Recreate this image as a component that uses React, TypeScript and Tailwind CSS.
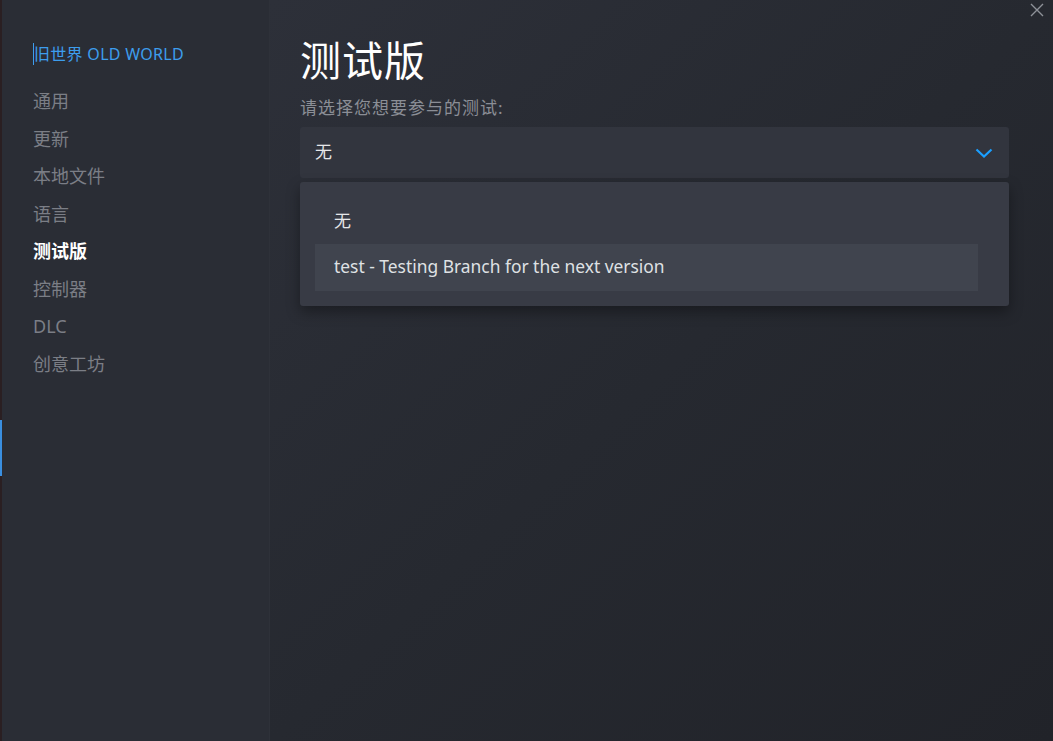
import React from 'react';

const navItems = ['通用', '更新', '本地文件', '语言', '测试版', '控制器', 'DLC', '创意工坊'];

const font = 'font-["Noto_Sans","Noto_Sans_CJK_SC",sans-serif]';

const App: React.FC = () => {
  return (
    <div className={`w-[1053px] h-[741px] flex overflow-hidden ${font}`}>
      {/* left strip of the window behind */}
      <div className="w-[2px] h-full bg-[#2a1f22] flex flex-col">
        <div className="h-[420px]" />
        <div className="h-[56px] bg-[#3a8fe0]" />
      </div>

      <div className="w-[268px] h-full bg-[#2a2d35] border-r border-[#2e3139] flex flex-col pl-[31px] pt-[42px]">
        <div className="text-[16px] leading-[24px] text-[#3d9ded] tracking-[0.3px]">
          <span className="border-l border-[#3d9ded]">旧世界</span> OLD WORLD
        </div>
        <div className="mt-[22px] flex flex-col">
          {navItems.map((item) => (
            <div
              key={item}
              className={`h-[37.5px] leading-[26px] text-[18px] ${
                item === '测试版' ? 'text-white font-bold' : 'text-[#7b7e86]'
              }`}
            >
              {item}
            </div>
          ))}
        </div>
      </div>

      <div className="flex-1 h-full bg-gradient-to-br from-[#2d3039] via-[#262930] to-[#212329] flex">
        <div className="w-[709px] ml-[30px] pt-[32px] flex flex-col">
          <h1 className="text-[41px] leading-[56px] text-white tracking-[1px]">测试版</h1>
          <div className="mt-[8px] text-[17px] leading-[24px] tracking-[1px] text-[#8b8e96]">请选择您想要参与的测试:</div>
          <div className="mt-[7px] h-[51px] rounded-[3px] bg-[#32353e] flex items-center justify-between pl-[15px] pr-[16px]">
            <span className="text-[17px] leading-[24px] text-[#e6e7e9] -mt-[2px]">无</span>
            <svg width="18" height="10" viewBox="0 0 18 10" fill="none">
              <path d="M1.5 1.5 L9 8.5 L16.5 1.5" stroke="#1a9fff" strokeWidth="2.2" />
            </svg>
          </div>
          <div className="mt-[4px] rounded-[3px] bg-[#383b45] shadow-[0_6px_14px_rgba(0,0,0,0.35)] pt-[15px] pb-[15px] pl-[15px] pr-[31px] flex flex-col">
            <div className="h-[47px] flex items-center pl-[19px] text-[17px] text-[#e6e7e9]">无</div>
            <div className="h-[47px] flex items-center pl-[19px] bg-[#40444e] text-[17.4px] text-[#dfe1e4] pb-[2px]">
              test - Testing Branch for the next version
            </div>
          </div>
        </div>
        <div className="flex-1 flex justify-end pt-[3px] pr-[9px]">
          <svg width="14" height="14" viewBox="0 0 14 14" fill="none">
            <path d="M1 1 L13 13 M13 1 L1 13" stroke="#8e9198" strokeWidth="1.4" />
          </svg>
        </div>
      </div>
    </div>
  );
};

export default App;
